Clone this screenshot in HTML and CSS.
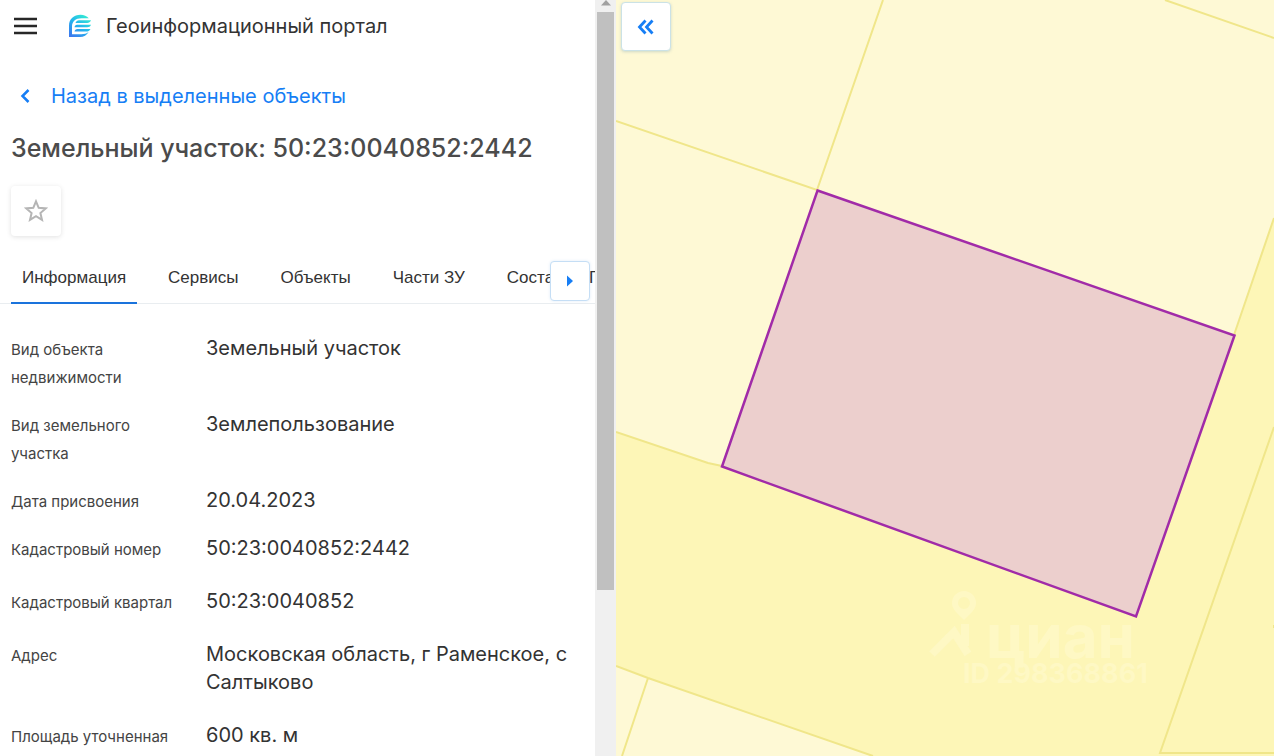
FILE: index.html
```
<!DOCTYPE html>
<html lang="ru">
<head>
<meta charset="utf-8">
<meta name="viewport" content="width=device-width, initial-scale=1">
<title>Геоинформационный портал</title>
<link rel="stylesheet" href="styles.css">
</head>
<body>
<div class="app">
  <main class="panel">
    <header class="header">
      <button class="menu" type="button" aria-label="Меню">
        <svg width="24" height="18" viewBox="0 0 24 18"><path d="M0 2h23M0 9h23M0 16h23" stroke="#272727" stroke-width="2.5"/></svg>
      </button>
      <svg class="logo" width="24" height="24" viewBox="0 0 24 24" aria-hidden="true">
        <defs><linearGradient id="logo-fill" gradientUnits="userSpaceOnUse" x1="19" y1="1" x2="3" y2="22"><stop offset="0" stop-color="#35efd0"/><stop offset=".5" stop-color="#23b5ee"/><stop offset="1" stop-color="#3b79ee"/></linearGradient></defs>
        <path d="M1 23V11.500C1 5 6 .8 12.500.8c3.400 0 6.300 1.200 8.300 3.400h-7.300C7.500 4.200 4 7.500 4 12.500v7.700h9.200c3 0 5.500-.6 7.500-2.400-1.800 3.600-5 5.200-8.700 5.200z" fill="url(#logo-fill)"/>
        <path d="M11 6.300h12c-.8 1.900-2 2.700-3.800 2.700H7.500c.8-1.600 1.900-2.700 3.500-2.700zM9 10.700h14c-.8 1.800-2 2.500-3.800 2.500H6.500c.3-1.500 1-2.300 2.500-2.500zM9.500 14.900h13c-1 1.800-2.500 2.600-4.500 2.600H6.500c.3-1.600 1.300-2.400 3-2.600z" fill="url(#logo-fill)"/>
      </svg>
      <span class="brand">Геоинформационный портал</span>
    </header>

    <a class="back" href="#selected">
      <svg width="10" height="16" viewBox="0 0 10 16" aria-hidden="true"><path d="M8.500 2 2.500 8l6 6" fill="none" stroke="currentColor" stroke-width="2.500"/></svg>
      Назад в выделенные объекты
    </a>

    <h1 class="title">Земельный участок: 50:23:0040852:2442</h1>

    <button class="favorite" type="button" aria-label="В избранное">
      <svg width="24" height="24" viewBox="0 0 24 24"><path d="m12 2.300 2.700 6.500 7 .6-5.300 4.600 1.600 6.900-6-3.700-6 3.700 1.600-6.900-5.300-4.600 7-.6z" fill="none" stroke="#b5b5b5" stroke-width="2"/></svg>
    </button>

    <nav class="tabs" aria-label="Разделы">
      <a class="tab tab-active" href="#info">Информация</a>
      <a class="tab" href="#services">Сервисы</a>
      <a class="tab" href="#objects">Объекты</a>
      <a class="tab" href="#parts">Части ЗУ</a>
      <a class="tab" href="#composition">Состав ЕЗП</a>
      <button class="tabs-next" type="button" aria-label="Следующие вкладки">
        <svg width="8" height="12" viewBox="0 0 8 12"><path d="M1 .5 7 6l-6 5.500z" fill="#167ef5"/></svg>
      </button>
    </nav>

    <dl class="details">
      <div class="row"><dt>Вид объекта недвижимости</dt><dd>Земельный участок</dd></div>
      <div class="row"><dt>Вид земельного участка</dt><dd>Землепользование</dd></div>
      <div class="row"><dt>Дата присвоения</dt><dd>20.04.2023</dd></div>
      <div class="row row-wide"><dt>Кадастровый номер</dt><dd>50:23:0040852:2442</dd></div>
      <div class="row row-wide"><dt>Кадастровый квартал</dt><dd>50:23:0040852</dd></div>
      <div class="row row-wide"><dt>Адрес</dt><dd>Московская область, г Раменское, с Салтыково</dd></div>
      <div class="row row-wide"><dt>Площадь уточненная</dt><dd>600 кв. м</dd></div>
    </dl>
  </main>

  <div class="scrollbar" aria-hidden="true">
    <svg class="scroll-arrow" width="10" height="6" viewBox="0 0 10 6"><path d="M0 5.500 5 0l5 5.500z" fill="#a0a0a0"/></svg>
    <div class="thumb"></div>
  </div>

  <section class="map" aria-label="Карта">
    <svg class="parcels" viewBox="616 0 658 756" preserveAspectRatio="xMinYMin slice">
      <path d="M616 0h658v756H616z" fill="#fef9d5"/>
      <path d="M616 432 708 463l14 3 512-131 40-117v538H873L648 678l-32-12z" fill="#fdf6b7"/>
      <g fill="none" stroke="#f0e68a" stroke-width="2">
        <path d="M883 0 817 190 616 121M1165 0l109 38M616 432l92 31 14 3M1234 335l40-117M1274 427l-114 326h114M616 666l32 12 225 78M648 678l-26 78"/>
      </g>
      <path d="M1273 625h2v3h-2z" fill="#f0e68a"/>
      <path d="m817.500 190.500 417 145-98.500 281-414-150z" fill="#eccfcd" stroke="#a12ba8" stroke-width="2.500"/>
      <g class="watermark">
        <path fill-rule="evenodd" d="M964 620c-7-7-12-11-12-17a12 12 0 0 1 24 0c0 6-5 10-12 17zm0-11a6 6 0 1 0 0-12 6 6 0 0 0 0 12z"/>
        <path class="mark-roof" d="m932 654 22-22 14 22M965 624v22"/>
        <text class="mark-name" x="986" y="658">циан</text>
        <text class="mark-id" x="963" y="683">ID 298368861</text>
      </g>
    </svg>
    <button class="collapse" type="button" aria-label="Свернуть панель">
      <svg width="18" height="16" viewBox="0 0 18 16"><path d="M8.500 1.500 2.500 8l6 6.500M15.500 1.500 9.500 8l6 6.500" fill="none" stroke="#167ef5" stroke-width="2.800"/></svg>
    </button>
  </section>
</div>
</body>
</html>
```
FILE: styles.css
```
* {
  box-sizing: border-box;
}

body {
  margin: 0;
  background: #fff;
  color: #333;
  font-family: Inter, "Noto Sans", sans-serif;
  font-size: 20px;
  line-height: 28px;
}

button {
  display: flex;
  align-items: center;
  justify-content: center;
  padding: 0;
  border: 0;
  background: #fff;
  cursor: pointer;
}

a {
  text-decoration: none;
}

.app {
  display: grid;
  grid-template-columns: minmax(0, 595fr) 21px minmax(0, 658fr);
  height: 100vh;
  overflow: hidden;
}

.panel {
  min-width: 0;
  overflow: hidden;
}

.header {
  display: flex;
  align-items: center;
  height: 52px;
  padding-left: 14px;
}

.logo {
  margin: 0 14px 0 30px;
}

.back {
  display: flex;
  align-items: center;
  gap: 21px;
  margin-top: 30px;
  padding-left: 20px;
  color: #167ef5;
}

.title {
  margin: 22px 0 0;
  padding-left: 11px;
  color: #4b4b4b;
  font-size: 25px;
  font-weight: 500;
  line-height: 32px;
}

.favorite {
  width: 50px;
  height: 50px;
  margin: 22px 0 0 11px;
  border-radius: 4px;
  box-shadow: 0 1px 5px rgba(0, 0, 0, 0.12);
}

.tabs {
  position: relative;
  display: flex;
  gap: 20px;
  height: 48px;
  margin-top: 20px;
  padding-left: 11px;
  border-bottom: 1px solid #e9edf0;
}

.tab {
  flex: none;
  height: 48px;
  padding: 8px 11px 0;
  color: #333;
  font-family: "Liberation Sans", Arial, sans-serif;
  font-size: 17px;
}

.tab-active {
  border-bottom: 2px solid #1a73dc;
}

.tabs-next {
  position: absolute;
  top: 5px;
  right: 5px;
  width: 40px;
  height: 40px;
  border: 1px solid #c5def5;
  border-radius: 4px;
  box-shadow: 0 0 3px rgba(40, 130, 220, 0.15);
}

.details {
  margin: 30px 0 0;
  padding: 0 20px 0 11px;
}

.row {
  display: grid;
  grid-template-columns: 165px 1fr;
  column-gap: 30px;
  align-items: baseline;
  padding-bottom: 20px;
}

.row-wide {
  padding-bottom: 25px;
}

.row dt {
  margin-bottom: -2px;
  color: #444;
  font-size: 15px;
}

.row dd {
  margin: 0;
}

.scrollbar {
  display: flex;
  flex-direction: column;
  align-items: center;
  background: #f0f0f0;
}

.scroll-arrow {
  flex: none;
  margin-bottom: 6px;
}

.thumb {
  width: 17px;
  height: 76.5%;
  background: #c0c0c0;
}

.map {
  position: relative;
  min-width: 0;
  overflow: hidden;
  background: #fef9d5;
}

.parcels {
  display: block;
  width: 100%;
  height: 100%;
}

.watermark {
  fill: #fef8c4;
  font-family: Inter, sans-serif;
}

.mark-roof {
  fill: none;
  stroke: #fef8c4;
  stroke-width: 8px;
}

.mark-name {
  font-size: 60px;
  font-weight: 700;
}

.mark-id {
  font-size: 27px;
  font-weight: 700;
}

.collapse {
  position: absolute;
  top: 2px;
  left: 5px;
  width: 50px;
  height: 49px;
  border: 1px solid #cbe2e6;
  border-radius: 4px;
  box-shadow: 0 1px 3px rgba(60, 120, 160, 0.25);
}
```
